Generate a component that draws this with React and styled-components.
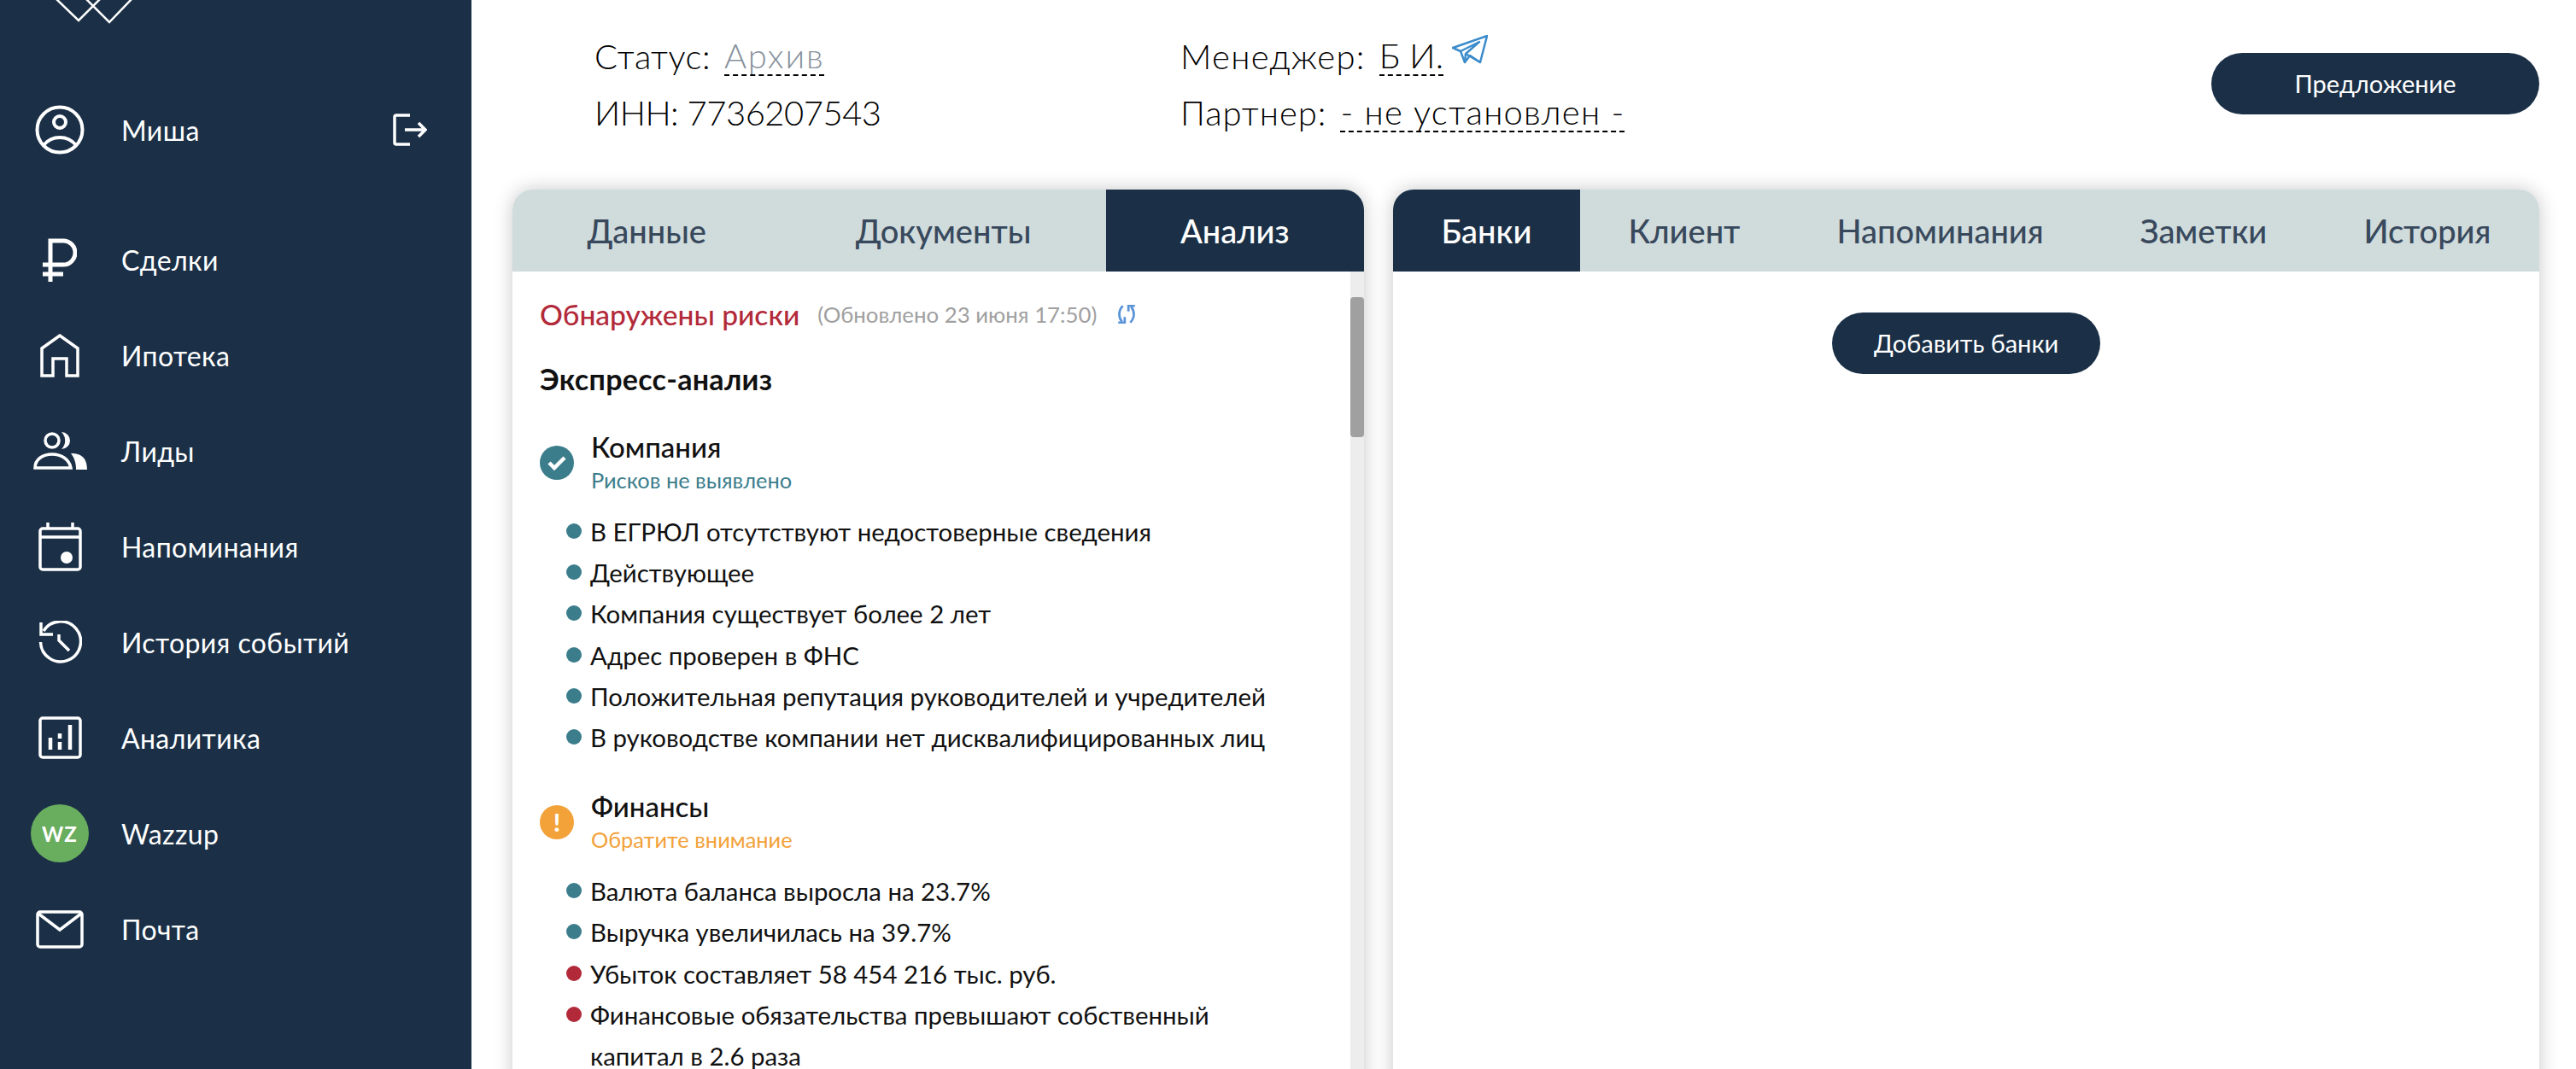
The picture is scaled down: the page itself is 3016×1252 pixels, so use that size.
import React from 'react';
import styled, { createGlobalStyle } from 'styled-components';

const navy = '#1b3047';
const teal = '#3c7d8c';
const orange = '#f3a23a';
const red = '#b22a3a';

const GlobalStyle = createGlobalStyle`
    html, body {
        margin: 0;
        height: 100%;
        background: #fff;
        overflow: hidden;
    }
    body {
        font-family: Lato, "Noto Sans", sans-serif;
        color: #111;
    }
`;

const Page = styled.div`
    display: flex;
    width: 3016px;
    height: 1252px;
    overflow: hidden;
`;

const Sidebar = styled.aside`
    width: 552px;
    flex: none;
    background: ${navy};
    color: #fff;
    padding: 0 52px 0 36px;
    box-sizing: border-box;
`;

const Logo = styled.svg`
    display: block;
    width: 100px;
    height: 28px;
    margin: 0 0 68px 24px;
`;

const NavRow = styled.div`
    display: flex;
    align-items: center;
    height: 112px;
    margin-bottom: ${(p) => p.$gap || 0}px;
    font-size: 32px;
    letter-spacing: 0.4px;
`;

const NavIcon = styled.div`
    width: 68px;
    height: 68px;
    flex: none;
    margin-right: 38px;
    display: flex;
    align-items: center;
    justify-content: center;
`;

const NavLabel = styled.span`
    flex: 1;
`;

const WzBadge = styled.div`
    width: 68px;
    height: 68px;
    border-radius: 50%;
    background: #69ad5e;
    display: flex;
    align-items: center;
    justify-content: center;
    font-size: 24px;
    font-weight: 700;
    letter-spacing: 1px;
`;

const Main = styled.main`
    flex: 1;
    min-width: 0;
    padding: 0 43px 0 48px;
`;

const Head = styled.header`
    display: flex;
    align-items: flex-start;
    height: 222px;
    padding: 44px 0 0 96px;
    box-sizing: border-box;
    font-size: 40px;
    font-weight: 300;
    color: #000;
`;

const HeadCol = styled.div`
    width: ${(p) => p.$w}px;
    flex: none;
    display: flex;
    flex-direction: column;
    gap: 22px;
`;

const HeadRow = styled.div`
    display: flex;
    align-items: center;
    height: 44px;
    white-space: nowrap;
    letter-spacing: ${(p) => p.$spacing}px;
`;

const HeadValue = styled.span`
    margin-left: ${(p) => p.$gap || 16}px;
    color: ${(p) => p.$muted ? '#87919b' : '#000'};
    border-bottom: 2px dashed #000;
    line-height: 44px;
    letter-spacing: ${(p) => p.$spacing || 1.2}px;
`;

const PlaneIcon = styled.svg`
    width: 42px;
    height: 34px;
    margin: -17px 0 0 10px;
`;

const Pill = styled.button`
    height: 72px;
    width: ${(p) => p.$w}px;
    padding: 0 0 2px;
    border: 0;
    border-radius: 36px;
    background: ${navy};
    color: #fff;
    font: 400 29px Lato, "Noto Sans", sans-serif;
    flex: none;
`;

const HeadAction = styled(Pill)`
    margin-left: auto;
    margin-top: 18px;
`;

const Panels = styled.div`
    display: flex;
    gap: 34px;
    height: 1100px;
`;

const Panel = styled.section`
    width: ${(p) => p.$w}px;
    flex: none;
    border-radius: 24px 24px 0 0;
    box-shadow: 0 0 22px rgba(0, 0, 0, 0.22);
    overflow: hidden;
    display: flex;
    flex-direction: column;
`;

const TabBar = styled.div`
    display: flex;
    height: 96px;
    flex: none;
    background: #d0dbdc;
`;

const Tab = styled.div`
    flex: 1 1 auto;
    padding: 0 40px;
    display: flex;
    align-items: center;
    justify-content: center;
    font-size: 38px;
    font-weight: 500;
    background: ${(p) => p.$active ? navy : 'transparent'};
    color: ${(p) => p.$active ? '#fff' : '#38495c'};
`;

const PanelBody = styled.div`
    flex: 1;
    display: flex;
    min-height: 0;
`;

const AnalysisScroll = styled.div`
    flex: 1;
    padding: 31px 0 0 32px;
`;

const Track = styled.div`
    width: 16px;
    flex: none;
    background: #ededed;
    padding-top: 30px;
`;

const Thumb = styled.div`
    height: 164px;
    background: #a0a0a0;
    border-radius: 4px;
`;

const RiskLine = styled.div`
    display: flex;
    align-items: center;
    height: 38px;
`;

const RiskTitle = styled.span`
    color: ${red};
    font-size: 33.5px;
    font-weight: 500;
`;

const Updated = styled.span`
    color: #a0a0a0;
    font-size: 25.8px;
    margin-left: 21px;
`;

const RefreshIcon = styled.svg`
    width: 26px;
    height: 26px;
    margin-left: 22px;
`;

const Express = styled.h2`
    margin: 38px 0 40px;
    font-size: 34px;
    line-height: 38px;
    font-weight: 700;
    letter-spacing: 0.3px;
`;

const Group = styled.div`
    margin-bottom: 36px;
`;

const GroupHead = styled.div`
    display: flex;
    align-items: center;
    gap: 20px;
    margin-bottom: 18px;
`;

const StateIcon = styled.div`
    width: 40px;
    height: 40px;
    border-radius: 50%;
    background: ${(p) => p.$color};
    color: #fff;
    flex: none;
    display: flex;
    align-items: center;
    justify-content: center;
    font-size: 28px;
    font-weight: 900;
`;

const GroupTitle = styled.div`
    font-size: 33px;
    line-height: 40px;
    font-weight: 500;
`;

const GroupSub = styled.div`
    font-size: 25.4px;
    line-height: 38px;
    color: ${(p) => p.$color};
`;

const List = styled.ul`
    list-style: none;
    margin: 0;
    padding: 0 0 0 31px;
`;

const Item = styled.li`
    position: relative;
    padding-left: 28px;
    width: 830px;
    font-size: 29.4px;
    line-height: 48.2px;
    &::before {
        content: "";
        position: absolute;
        left: 0;
        top: 14px;
        width: 18px;
        height: 18px;
        border-radius: 50%;
        background: ${(p) => p.$bad ? red : teal};
    }
`;

const BanksBody = styled.div`
    flex: 1;
    display: flex;
    justify-content: center;
    padding-top: 48px;
    background: #fff;
`;

const icons = {
    user: (
        <svg width="58" height="58" viewBox="0 0 58 58" fill="none" stroke="#fff" strokeWidth="4">
            <circle cx="29" cy="29" r="26.5" />
            <circle cx="29" cy="20" r="7" />
            <path d="M10 47c5-6 12-9 19-9s14 3 19 9" />
        </svg>
    ),
    ruble: (
        <svg width="40" height="51" viewBox="0 0 40 51" fill="none" stroke="#fff" strokeWidth="5">
            <path d="M9 51V3h15a14 14 0 0 1 0 28H0M0 42h24" />
        </svg>
    ),
    house: (
        <svg width="46" height="51" viewBox="0 0 46 51" fill="none" stroke="#fff" strokeWidth="3.500">
            <path d="M2 49V17L23 2l21 15v32H31V29H15v20z" />
        </svg>
    ),
    people: (
        <svg width="63" height="44" viewBox="0 0 63 44" fill="none" stroke="#fff" strokeWidth="3.500">
            <circle cx="22" cy="10" r="8" />
            <path d="M2 42c0-10 9-16 20-16s20 6 22 16z" />
            <path d="M33 0a10 10 0 0 1 0 20 14 14 0 0 0 0-20zM44 25c12 0 19 5 19 19H50c0-8-2-14-6-19z" fill="#fff" stroke="none" />
        </svg>
    ),
    calendar: (
        <svg width="51" height="57" viewBox="0 0 51 57" fill="none" stroke="#fff" strokeWidth="3.500">
            <rect x="2" y="7" width="47" height="48" rx="3" />
            <path d="M2 17h47M11 0v7M40 0v7" />
            <circle cx="33" cy="41" r="7" fill="#fff" stroke="none" />
        </svg>
    ),
    history: (
        <svg width="51" height="50" viewBox="0 0 51 50" fill="none" stroke="#fff" strokeWidth="3.500">
            <path d="M6 12A23.500 23.500 0 1 1 2.500 25" />
            <path d="M3 2v14h14" />
            <path d="M24 16v7l12 12" />
        </svg>
    ),
    chart: (
        <svg width="51" height="50" viewBox="0 0 51 50" fill="none" stroke="#fff" strokeWidth="3.500">
            <rect x="2" y="2" width="47" height="46" rx="3" />
            <path d="M14 39V25M25 39v-9M25 26v-6M37 39V10" strokeWidth="4.500" />
        </svg>
    ),
    mail: (
        <svg width="56" height="45" viewBox="0 0 56 45" fill="none" stroke="#fff" strokeWidth="3.500">
            <rect x="2" y="2" width="52" height="41" rx="3" />
            <path d="M3 4l25 19L53 4" />
        </svg>
    ),
};

const navItems = [
    ['ruble', 'Сделки'],
    ['house', 'Ипотека'],
    ['people', 'Лиды'],
    ['calendar', 'Напоминания'],
    ['history', 'История событий'],
    ['chart', 'Аналитика'],
    ['wz', 'Wazzup'],
    ['mail', 'Почта'],
];

const companyItems = [
    'В ЕГРЮЛ отсутствуют недостоверные сведения',
    'Действующее',
    'Компания существует более 2 лет',
    'Адрес проверен в ФНС',
    'Положительная репутация руководителей и учредителей',
    'В руководстве компании нет дисквалифицированных лиц',
];

const financeItems = [
    ['Валюта баланса выросла на 23.7%', false],
    ['Выручка увеличилась на 39.7%', false],
    ['Убыток составляет 58 454 216 тыс. руб.', true],
    ['Финансовые обязательства превышают собственный капитал в 2.6 раза', true],
];

const App = () => {
    return (
        <Page>
            <GlobalStyle />
            <Sidebar>
                <Logo viewBox="0 0 100 28" fill="none" stroke="#fff" strokeWidth="2.500">
                    <path d="M5 -2L32 24L58 -2M40 -2L68 26L95 -2" />
                </Logo>
                <NavRow $gap={40}>
                    <NavIcon>{icons.user}</NavIcon>
                    <NavLabel>Миша</NavLabel>
                    <svg width="40" height="38" viewBox="0 0 40 38" fill="none" stroke="#fff" strokeWidth="3.500">
                        <path d="M20 2H4a2 2 0 0 0-2 2v30a2 2 0 0 0 2 2h16M14 19h24M30 11l8 8-8 8" />
                    </svg>
                </NavRow>
                {navItems.map(([icon, label]) => (
                    <NavRow key={label}>
                        <NavIcon>{icon === 'wz' ? <WzBadge>WZ</WzBadge> : icons[icon]}</NavIcon>
                        <NavLabel>{label}</NavLabel>
                    </NavRow>
                ))}
            </Sidebar>
            <Main>
                <Head>
                    <HeadCol $w={686}>
                        <HeadRow $spacing={0.5}>Статус:<HeadValue $muted $spacing={1.8}>Архив</HeadValue></HeadRow>
                        <HeadRow $spacing={-0.5}>ИНН: 7736207543</HeadRow>
                    </HeadCol>
                    <HeadCol $w={700}>
                        <HeadRow $spacing={1.3}>
                            Менеджер:<HeadValue $spacing={0.2}>Б И.</HeadValue>
                            <PlaneIcon viewBox="0 0 42 34" fill="none" stroke="#3c8ccb" strokeWidth="2.500" strokeLinejoin="round">
                                <path d="M1 15L41 1L33 32L21 24L15 32L10 19z" />
                                <path d="M10 19L32 8L16 22L15 32M16 22L33 32" />
                            </PlaneIcon>
                        </HeadRow>
                        <HeadRow $spacing={1}>Партнер:<HeadValue>- не установлен -</HeadValue></HeadRow>
                    </HeadCol>
                    <HeadAction $w={384}>Предложение</HeadAction>
                </Head>
                <Panels>
                    <Panel $w={997}>
                        <TabBar>
                            <Tab>Данные</Tab>
                            <Tab>Документы</Tab>
                            <Tab $active>Анализ</Tab>
                        </TabBar>
                        <PanelBody>
                            <AnalysisScroll>
                                <RiskLine>
                                    <RiskTitle>Обнаружены риски</RiskTitle>
                                    <Updated>(Обновлено 23 июня 17:50)</Updated>
                                    <RefreshIcon viewBox="0 0 24 24" fill="none" stroke="#5b93d8" strokeWidth="2.500">
                                        <path d="M8 3C3 8 3 15 7 20M3 21h7v-6" />
                                        <path d="M16 21c5-5 5-12 1-17M21 3h-7v6" />
                                    </RefreshIcon>
                                </RiskLine>
                                <Express>Экспресс-анализ</Express>
                                <Group>
                                    <GroupHead>
                                        <StateIcon $color={teal}>
                                            <svg width="24" height="20" viewBox="0 0 24 20" fill="none" stroke="#fff" strokeWidth="4.500">
                                                <path d="M3 10l6 6L21 4" />
                                            </svg>
                                        </StateIcon>
                                        <div>
                                            <GroupTitle>Компания</GroupTitle>
                                            <GroupSub $color={teal}>Рисков не выявлено</GroupSub>
                                        </div>
                                    </GroupHead>
                                    <List>
                                        {companyItems.map((text) => <Item key={text}>{text}</Item>)}
                                    </List>
                                </Group>
                                <Group>
                                    <GroupHead>
                                        <StateIcon $color={orange}>!</StateIcon>
                                        <div>
                                            <GroupTitle>Финансы</GroupTitle>
                                            <GroupSub $color={orange}>Обратите внимание</GroupSub>
                                        </div>
                                    </GroupHead>
                                    <List>
                                        {financeItems.map(([text, bad]) => <Item key={text} $bad={bad}>{text}</Item>)}
                                    </List>
                                </Group>
                            </AnalysisScroll>
                            <Track><Thumb /></Track>
                        </PanelBody>
                    </Panel>
                    <Panel $w={1342}>
                        <TabBar>
                            <Tab $active>Банки</Tab>
                            <Tab>Клиент</Tab>
                            <Tab>Напоминания</Tab>
                            <Tab>Заметки</Tab>
                            <Tab>История</Tab>
                        </TabBar>
                        <BanksBody>
                            <Pill $w={314}>Добавить банки</Pill>
                        </BanksBody>
                    </Panel>
                </Panels>
            </Main>
        </Page>
    );
};

export default App;
